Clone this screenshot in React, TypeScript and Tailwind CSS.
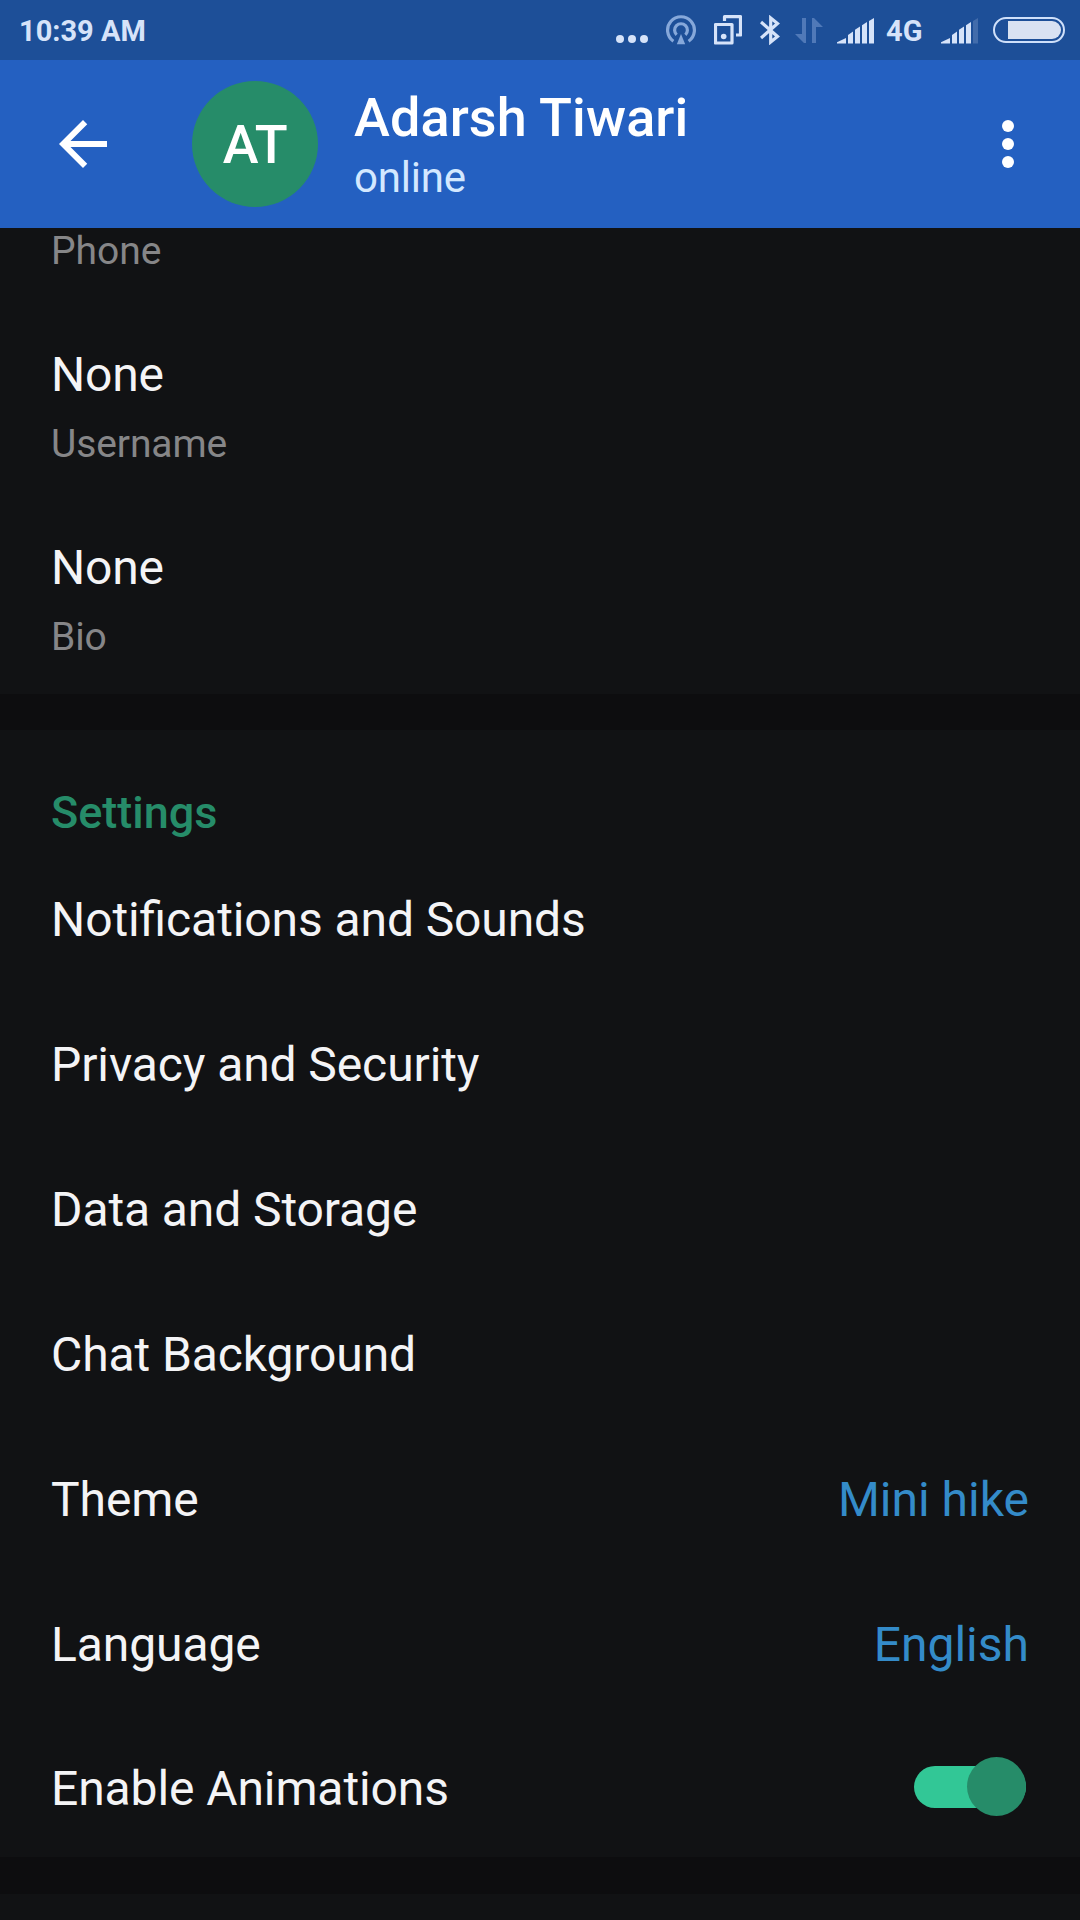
import React, { useState } from 'react';

type Info = {
  value: string;
  label: string;
};

type Setting = {
  title: string;
  value?: string;
  toggle?: boolean;
};

const infos: Info[] = [
  { value: 'None', label: 'Username' },
  { value: 'None', label: 'Bio' },
];

const settings: Setting[] = [
  { title: 'Notifications and Sounds' },
  { title: 'Privacy and Security' },
  { title: 'Data and Storage' },
  { title: 'Chat Background' },
  { title: 'Theme', value: 'Mini hike' },
  { title: 'Language', value: 'English' },
  { title: 'Enable Animations', toggle: true },
];

function Signal({ weak }: { weak?: boolean }): JSX.Element {
  return (
    <svg width="37" height="26" viewBox="0 0 37 26" fill="currentColor">
      <path d="M0 25.5V24.2L9 20v5.5z" />
      <path d="M11 25.5V17l5-3.6v12.1z" />
      <path d="M18 25.5V11.8L23 8.6v16.9z" />
      <path d="M25 25.5V7.2L30 4v21.5z" />
      <path d="M32 25.5V3L37 0v25.5z" opacity={weak ? 0.2 : 1} />
    </svg>
  );
}

function StatusBar(): JSX.Element {
  return (
    <div className="flex h-[60px] items-center bg-[#1d4f98] pl-[19px] pr-[15px] text-[#d6e3f9]">
      <div className="flex-1 pt-0.5 text-[29px] font-bold leading-[62px]">10:39 AM</div>
      <svg className="mt-[18px]" width="32" height="8" viewBox="0 0 32 8" fill="currentColor">
        <circle cx="4" cy="4" r="4" />
        <circle cx="16" cy="4" r="4" />
        <circle cx="28" cy="4" r="4" />
      </svg>
      {/* hotspot */}
      <svg
        className="ml-[18px] text-[#86a8da]"
        width="30"
        height="30"
        viewBox="0 0 30 30"
        fill="none"
        stroke="currentColor"
        strokeWidth="3.2"
      >
        <path d="M7.4 26.2A13.4 13.4 0 1 1 22.6 26.2" />
        <path d="M10.6 19.8A6.4 6.4 0 1 1 19.4 19.8" />
        <path d="M15 19l4.2 10.3h-8.4z" fill="currentColor" stroke="none" />
      </svg>
      <svg
        className="ml-[18px]"
        width="28"
        height="30"
        viewBox="0 0 28 30"
        fill="none"
        stroke="currentColor"
        strokeWidth="3.2"
        strokeLinejoin="round"
      >
        <rect x="1.5" y="9.5" width="16.5" height="18.5" />
        <path d="M10.5 6V1.7h16v18.3H22" />
        <circle cx="9.7" cy="21.5" r="2.8" fill="currentColor" stroke="none" />
      </svg>
      <svg
        className="ml-[18px]"
        width="20"
        height="30"
        viewBox="0 0 20 30"
        fill="none"
        stroke="currentColor"
        strokeWidth="3.2"
      >
        <path d="M1 7L17.5 21.5L10.7 27V3L17.5 8.5L1 23" />
      </svg>
      <svg
        className="ml-[15px] text-[#5079b8]"
        width="28"
        height="27"
        viewBox="0 0 28 27"
        fill="currentColor"
      >
        <path d="M7 1h4v25H9L0 17h7z" />
        <path d="M17 26h4V10h7L19 1h-2z" />
      </svg>
      <div className="ml-[14px] mt-px">
        <Signal />
      </div>
      <div className="ml-[12px] w-[37px] pt-0.5 text-[29px] font-bold leading-[62px]">4G</div>
      <div className="ml-[18px] mt-px">
        <Signal weak />
      </div>
      <svg className="ml-[15px]" width="72" height="26" viewBox="0 0 72 26">
        <rect x="1" y="1" width="70" height="24" rx="12" fill="none" stroke="#cfe0fa" strokeWidth="2" />
        <path d="M15 4h44a9 9 0 0 1 0 18H15z" fill="#d9e2f2" />
      </svg>
    </div>
  );
}

function Header(): JSX.Element {
  return (
    <header className="flex h-[168px] items-center bg-[#2460c1] pl-[47px] pr-9 text-white">
      <svg width="72" height="72" viewBox="0 0 24 24" fill="currentColor">
        <path d="M20 11H7.83l5.59-5.59L12 4l-8 8 8 8 1.41-1.41L7.83 13H20v-2z" />
      </svg>
      <div className="ml-[73px] flex h-[126px] w-[126px] items-center justify-center rounded-full bg-[#268c69] text-[54px] font-medium tracking-[-0.5px]">
        AT
      </div>
      <div className="ml-9 flex-1 pt-[3px]">
        <div className="text-[54px] font-medium leading-[64px] tracking-[0.1px]">Adarsh Tiwari</div>
        <div className="text-[42px] leading-[56px] tracking-[-0.2px] text-[#d3e8ff]">online</div>
      </div>
      <svg width="72" height="72" viewBox="0 0 24 24" fill="currentColor">
        <circle cx="12" cy="6" r="2" />
        <circle cx="12" cy="12" r="2" />
        <circle cx="12" cy="18" r="2" />
      </svg>
    </header>
  );
}

function App(): JSX.Element {
  const [animations, setAnimations] = useState(true);

  return (
    <main className="h-[1920px] w-[1080px] overflow-hidden bg-[#111214] font-['Roboto',sans-serif] text-[#f4f4f6]">
      <StatusBar />
      <Header />
      <section className="h-[467px] px-[51px]">
        <div className="-mt-px text-[39px] leading-[48px] text-[#868688]">Phone</div>
        {infos.map((info) => (
          <div className="mt-[72px]" key={info.label}>
            <div className="text-[48px] leading-[56px] tracking-[-0.2px]">{info.value}</div>
            <div className="mt-[17px] text-[39px] leading-[48px] tracking-[-0.1px] text-[#868688]">
              {info.label}
            </div>
          </div>
        ))}
      </section>
      <div className="h-9 bg-[#0d0d0f]" />
      <section className="h-[1127px] px-[51px] pt-[53px]">
        <h2 className="h-[60px] text-[45px] font-medium leading-[60px] text-[#268c69]">Settings</h2>
        {settings.map((item) => (
          <div
            className={`flex items-center justify-between pt-2 text-[48px] ${
              (item.toggle && 'h-[143px]') || 'h-[145px]'
            }`}
            key={item.title}
          >
            {/* fi ligature is off by default once tracking is set */}
            <span className="tracking-[-0.1px] [font-feature-settings:'liga']">{item.title}</span>
            {item.value && <span className="text-[#348bc9]">{item.value}</span>}
            {item.toggle && (
              <button
                className={`mb-[4px] mr-[3px] flex h-[42px] w-[112px] cursor-pointer items-center rounded-full ${
                  (animations && 'justify-end bg-[#32c796]') || 'justify-start bg-gray-600'
                }`}
                onClick={() => setAnimations(!animations)}
              >
                <span className="h-[59px] w-[59px] shrink-0 rounded-full bg-[#268c69]" />
              </button>
            )}
          </div>
        ))}
      </section>
      <div className="h-[37px] bg-[#0d0d0f]" />
    </main>
  );
}

export default App;
